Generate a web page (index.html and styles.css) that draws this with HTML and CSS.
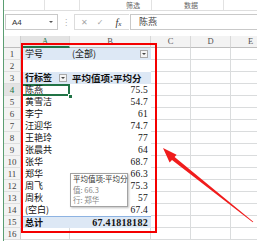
FILE: index.html
```html
<!DOCTYPE html>
<html lang="zh">
<head>
<meta charset="utf-8">
<link rel="stylesheet" href="styles.css">
</head>
<body>
<div class="app">
  <div class="ribbon">
    <div class="rg g1"></div>
    <div class="rg g2"></div>
    <div class="rg g3"><span class="rl l3">筛选</span></div>
    <div class="rg g4"><span class="rl l4">数据</span></div>
    <div class="rg g5"></div>
  </div>
  <div class="fbar">
    <div class="namebox"><span>A4</span><span class="nb-arrow"></span></div>
    <div class="dots">⋮</div>
    <div class="fxgroup">
      <span class="ico x">✕</span>
      <span class="ico ok">✓</span>
      <span class="fx"><i>f</i><span class="sx">x</span></span>
    </div>
    <div class="input">陈燕</div>
  </div>
  <div class="sheet">
    <div class="corner"></div><div class="ch on">A</div><div class="ch">B</div><div class="ch">C</div><div class="ch">D</div><div class="ch">E</div>

    <div class="rh">1</div><div class="pa blue">学号</div><div class="pb blue flex"><span>(全部)</span><span class="dd"></span></div><div class="c"></div><div class="c"></div><div class="c"></div>
    <div class="rh">2</div><div class="pa"></div><div class="pb"></div><div class="c"></div><div class="c"></div><div class="c"></div>
    <div class="rh">3</div><div class="pa blue bold flex"><span>行标签</span><span class="dd dd-a"></span></div><div class="pb blue bold head">平均值项:平均分</div><div class="c"></div><div class="c"></div><div class="c"></div>
    <div class="rh on">4</div><div class="pa sel">陈燕</div><div class="pb num">75.5</div><div class="c"></div><div class="c"></div><div class="c"></div>
    <div class="rh">5</div><div class="pa">黄雪洁</div><div class="pb num">54.7</div><div class="c"></div><div class="c"></div><div class="c"></div>
    <div class="rh">6</div><div class="pa">李宁</div><div class="pb num">61</div><div class="c"></div><div class="c"></div><div class="c"></div>
    <div class="rh">7</div><div class="pa">汪迎华</div><div class="pb num">74.7</div><div class="c"></div><div class="c"></div><div class="c"></div>
    <div class="rh">8</div><div class="pa">王艳玲</div><div class="pb num">77</div><div class="c"></div><div class="c"></div><div class="c"></div>
    <div class="rh">9</div><div class="pa">张晨共</div><div class="pb num">64</div><div class="c"></div><div class="c"></div><div class="c"></div>
    <div class="rh">10</div><div class="pa">张华</div><div class="pb num">68.7</div><div class="c"></div><div class="c"></div><div class="c"></div>
    <div class="rh">11</div><div class="pa">郑华</div><div class="pb num">66.3</div><div class="c"></div><div class="c"></div><div class="c"></div>
    <div class="rh">12</div><div class="pa">周飞</div><div class="pb num">75.3</div><div class="c"></div><div class="c"></div><div class="c"></div>
    <div class="rh">13</div><div class="pa">周秋</div><div class="pb num">57</div><div class="c"></div><div class="c"></div><div class="c"></div>
    <div class="rh">14</div><div class="pa">(空白)</div><div class="pb num">67.4</div><div class="c"></div><div class="c"></div><div class="c"></div>
    <div class="rh">15</div><div class="pa tot bold">总计</div><div class="pb tot bold num">67.41818182</div><div class="c"></div><div class="c"></div><div class="c"></div>
    <div class="rh">16</div><div class="c"></div><div class="c"></div><div class="c"></div><div class="c"></div><div class="c"></div>
  </div>
</div>

<div class="tip">
  <div class="tip-title">平均值项:平均分</div>
  <div class="tip-line">值: 66.3</div>
  <div class="tip-line">行: 郑华</div>
</div>

<div class="mark"></div>
<svg class="arrow" width="257" height="241" viewBox="0 0 257 241">
  <polygon points="163,148 176.6,154.7 174.6,157.1 253.3,221.8 252.7,222.2 172,160.1 169.6,162.4" fill="#f01c1c"/>
</svg>
</body>
</html>
```

FILE: styles.css
```css
html, body {
  margin: 0;
  padding: 0;
}
body {
  width: 257px;
  height: 241px;
  overflow: hidden;
  background: #fff;
  position: relative;
  font-family: "Noto Sans CJK SC", "Liberation Sans", sans-serif;
  color: #222;
}
.app {
  margin-left: 3px;
  border-left: 1px solid #5a9e72;
  height: 241px;
  overflow: hidden;
}

/* ribbon remnant */
.ribbon {
  display: flex;
  height: 10px;
  border-bottom: 1px solid #dedede;
}
.rg {
  border-right: 1px solid #e2e2e2;
  font-size: 7px;
  line-height: 10px;
  color: #666;
  white-space: nowrap;
}
.g1 { width: 40px; }
.g2 { width: 34px; }
.g3 { width: 71px; }
.g4 { width: 71px; }
.g5 { flex: 1; border-right: none; }
.l3 { padding-left: 46px; }
.l4 { padding-left: 32px; }

/* formula bar */
.fbar {
  display: flex;
  align-items: center;
  height: 16px;
  padding: 3px 0 6px;
}
.namebox {
  margin-left: 1px;
  width: 53px;
  height: 16px;
  box-sizing: border-box;
  border: 1px solid #c9c9c9;
  display: flex;
  align-items: center;
  justify-content: space-between;
  padding: 0 4px 0 6px;
  font: 8px "Liberation Sans", sans-serif;
  color: #333;
}
.nb-arrow {
  width: 0;
  height: 0;
  border-left: 2px solid transparent;
  border-right: 2px solid transparent;
  border-top: 2px solid #555;
}
.dots {
  width: 16px;
  text-align: center;
  font: 8px "DejaVu Sans", sans-serif;
  color: #aaa;
}
.fxgroup {
  width: 55px;
  height: 16px;
  box-sizing: border-box;
  border: 1px solid #dcdcdc;
  border-right: none;
  display: flex;
  align-items: center;
}
.ico {
  font: 8px "DejaVu Sans", sans-serif;
  color: #a5a5a5;
}
.x { margin-left: 6px; }
.ok { margin-left: 9px; }
.fx {
  margin-left: 12px;
  font: italic 10px "Liberation Serif", serif;
  color: #333;
}
.sx {
  font-size: 7px;
  font-style: italic;
}
.input {
  flex: 1;
  margin-left: 1px;
  height: 16px;
  box-sizing: border-box;
  border: 1px solid #c9c9c9;
  border-right: none;
  padding-left: 8px;
  font-size: 9px;
  line-height: 14px;
  color: #444;
}

/* sheet */
.sheet {
  display: grid;
  grid-template-columns: 17px 49px 81px 40px 40px 40px;
  grid-auto-rows: 12px;
}
.sheet > div {
  box-sizing: border-box;
  white-space: nowrap;
}
.corner {
  background: #f3f3f3;
  border-right: 1px solid #cfcfcf;
  border-bottom: 1px solid #bdbdbd;
}
.ch {
  background: #f3f3f3;
  border-right: 1px solid #d8d8d8;
  border-bottom: 1px solid #bdbdbd;
  font: 8.5px "Liberation Serif", serif;
  line-height: 11px;
  text-align: center;
  color: #555;
}
.ch.on {
  background: #e3e3e3;
  border-bottom: 2px solid #217346;
  color: #217346;
}
.rh {
  background: #f3f3f3;
  border-right: 1px solid #cdcdcd;
  border-bottom: 1px solid #dedede;
  font: 9px "Liberation Serif", serif;
  line-height: 12px;
  text-align: center;
  color: #444;
}
.rh.on {
  background: #e3e3e3;
  color: #217346;
}
.c {
  border-right: 1px solid #dadcdd;
  border-bottom: 1px solid #dadcdd;
}
.pa, .pb {
  background: #fff;
  font-size: 9px;
  line-height: 12px;
  color: #111;
}
.pa { padding-left: 4px; }
.pb { padding: 0 3px 0 2px; }
.pb.num {
  text-align: right;
  font: 9.5px "Liberation Serif", serif;
  line-height: 12px;
  letter-spacing: 0.2px;
}
.pb.num.bold {
  font-size: 10px;
  font-weight: bold;
  letter-spacing: 0.3px;
}
.head { font-size: 9.5px; }
.blue { background: #dde8f5; }
.bold { font-weight: bold; }
.tot {
  background: #dde8f5;
  border-top: 1px solid #8db3e2;
  line-height: 11px;
}
.flex {
  display: flex;
  align-items: center;
  justify-content: space-between;
}
.dd {
  width: 8px;
  height: 8px;
  box-sizing: border-box;
  border: 1px solid #a9a9a9;
  background: #f4f4f4;
  display: flex;
  align-items: center;
  justify-content: center;
}
.dd::after {
  content: "";
  border-left: 2px solid transparent;
  border-right: 2px solid transparent;
  border-top: 2px solid #444;
}
.dd-a { margin-right: 3px; }
.sel {
  position: relative;
  z-index: 2;
  box-shadow: inset 0 0 0 2px #217346;
}
.sel::after {
  content: "";
  position: absolute;
  right: -3px;
  bottom: -3px;
  width: 3px;
  height: 3px;
  background: #217346;
  border: 1px solid #fff;
}

/* overlays */
.tip {
  position: absolute;
  left: 70px;
  top: 173px;
  width: 58px;
  box-sizing: border-box;
  border: 1px solid #a3a3a3;
  background: #fff;
  box-shadow: 1px 1px 2px rgba(0, 0, 0, 0.25);
  padding: 0 2px;
  font-size: 7.5px;
  line-height: 10.5px;
  white-space: nowrap;
  z-index: 3;
}
.tip-title { color: #333; }
.tip-line { color: #8a8a8a; }
.mark {
  position: absolute;
  left: 21px;
  top: 43px;
  width: 136px;
  height: 190px;
  box-sizing: border-box;
  border: 2px solid #f40000;
  z-index: 4;
}
.arrow {
  position: absolute;
  left: 0;
  top: 0;
  z-index: 5;
}
```
